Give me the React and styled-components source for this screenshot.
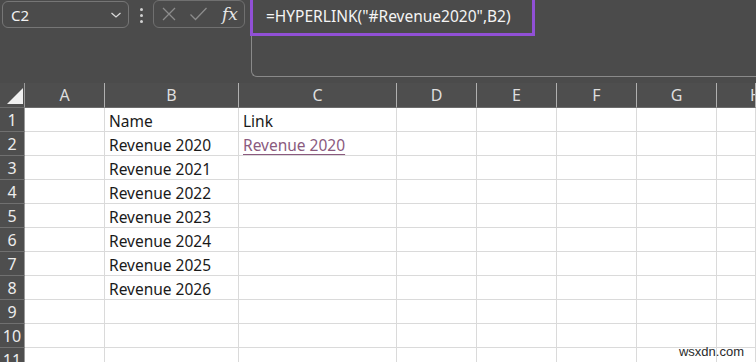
import React from "react";
import styled, { createGlobalStyle } from "styled-components";

const Global = createGlobalStyle`
  html, body { margin: 0; padding: 0; background: #4b4b4b; }
  body { font-family: "Noto Sans", "Open Sans", sans-serif; }
`;

const Screen = styled.div`
  position: relative;
  width: 756px;
  height: 362px;
  overflow: hidden;
  background: #4b4b4b;
`;

const FormulaBar = styled.div`
  display: flex;
  align-items: flex-start;
  height: 83px;
  box-sizing: border-box;
`;

const NameBox = styled.div`
  display: flex;
  align-items: center;
  justify-content: space-between;
  box-sizing: border-box;
  width: 127px;
  height: 27px;
  margin: 1px 0 0 2px;
  padding: 0 6px 0 8px;
  border: 1px solid #767676;
  border-radius: 6px;
  color: #f2f2f2;
  font-size: 15px;
`;

const Dots = styled.div`
  display: flex;
  flex-direction: column;
  gap: 3px;
  margin: 8px 10px 0 11px;
  span {
    width: 3px;
    height: 3px;
    border-radius: 50%;
    background: #d0d0d0;
  }
`;

const FxBox = styled.div`
  display: flex;
  align-items: center;
  gap: 12px;
  box-sizing: border-box;
  width: 92px;
  height: 28px;
  padding: 0 6px 0 7px;
  border: 1px solid #707070;
  border-radius: 6px;
`;

const FxText = styled.span`
  font-family: "DejaVu Serif", "Liberation Serif", serif;
  font-style: italic;
  font-size: 17px;
  color: #e6e6e6;
  margin-left: 2px;
`;

const FormulaArea = styled.div`
  position: relative;
  flex: 1;
  height: 77px;
  margin-left: 6px;
  box-sizing: border-box;
  border-left: 1px solid #8a8a8a;
  border-bottom: 1px solid #8a8a8a;
  border-bottom-left-radius: 6px;
`;

const FormulaText = styled.div`
  padding: 4px 0 0 14px;
  color: #f4f4f4;
  font-size: 15.5px;
  line-height: 24px;
  white-space: nowrap;
`;

const Highlight = styled.div`
  position: absolute;
  left: -2px;
  top: -3px;
  width: 285px;
  height: 39px;
  box-sizing: border-box;
  border: 3px solid #9150d6;
  pointer-events: none;
`;

const Grid = styled.div`
  display: grid;
  grid-template-columns: 25px 80px 134px 158px 80px 80px 80px 80px 1fr;
  grid-template-rows: 25px;
  grid-auto-rows: 24px;
`;

const Corner = styled.div`
  position: relative;
  background: #4e4e4e;
  border-right: 1px solid #9a9a9a;
  border-bottom: 1px solid #6c6c6c;
  box-sizing: border-box;
`;

const ColHead = styled.div`
  display: flex;
  align-items: center;
  justify-content: ${(p) => (p.$left ? "flex-start" : "center")};
  padding-left: ${(p) => (p.$left ? "33px" : "0")};
  background: #4e4e4e;
  color: #dedede;
  font-size: 16px;
  box-sizing: border-box;
  border-right: 1px solid #b0b0b0;
  border-bottom: 1px solid #6c6c6c;
  overflow: hidden;
`;

const RowHead = styled.div`
  display: flex;
  align-items: center;
  justify-content: center;
  background: #4e4e4e;
  color: #ececec;
  font-size: 16px;
  box-sizing: border-box;
  border-right: 1px solid #9a9a9a;
  border-bottom: 1px solid #707070;
`;

const Cell = styled.div`
  display: flex;
  align-items: center;
  background: #ffffff;
  box-sizing: border-box;
  border-right: 1px solid #dadada;
  border-bottom: 1px solid #dadada;
  padding: 2px 0 0 4px;
  font-size: 15.5px;
  color: #1a1a1a;
  white-space: nowrap;
`;

const Link = styled.span`
  color: #8a5a7e;
  text-decoration: underline;
  text-decoration-thickness: 1px;
  text-underline-offset: 3px;
`;

const Watermark = styled.div`
  position: absolute;
  right: 12px;
  bottom: 3px;
  font-family: "Liberation Sans", Arial, sans-serif;
  font-size: 13px;
  color: #2a2a2a;
`;

const cols = ["A", "B", "C", "D", "E", "F", "G"];
const bData = ["Name", "Revenue 2020", "Revenue 2021", "Revenue 2022", "Revenue 2023", "Revenue 2024", "Revenue 2025", "Revenue 2026"];

export default function App() {
  const rows = Array.from({ length: 11 }, (_, i) => i + 1);
  return (
    <Screen>
      <Global />
      <FormulaBar>
        <NameBox>
          <span>C2</span>
          <svg width="12" height="8" viewBox="0 0 12 8">
            <path d="M1.5 2 L6 6 L10.5 2" fill="none" stroke="#d8d8d8" strokeWidth="1.3" />
          </svg>
        </NameBox>
        <Dots>
          <span />
          <span />
          <span />
        </Dots>
        <FxBox>
          <svg width="16" height="16" viewBox="0 0 16 16">
            <path d="M2 2 L14 14 M14 2 L2 14" stroke="#8c8c8c" strokeWidth="1.3" fill="none" />
          </svg>
          <svg width="19" height="16" viewBox="0 0 19 16">
            <path d="M1.5 8.5 L6.5 13.5 L17.5 2" stroke="#8c8c8c" strokeWidth="1.3" fill="none" />
          </svg>
          <FxText>fx</FxText>
        </FxBox>
        <FormulaArea>
          <FormulaText>=HYPERLINK("#Revenue2020",B2)</FormulaText>
          <Highlight />
        </FormulaArea>
      </FormulaBar>
      <Grid>
        <Corner>
          <svg width="16" height="16" viewBox="0 0 16 16" style={{ position: "absolute", left: 7, bottom: 3 }}>
            <path d="M16 0 L16 16 L0 16 Z" fill="#f0f0f0" />
          </svg>
        </Corner>
        {cols.map((c) => (
          <ColHead key={c}>{c}</ColHead>
        ))}
        <ColHead $left>H</ColHead>
        {rows.map((r) => (
          <React.Fragment key={r}>
            <RowHead>{r}</RowHead>
            <Cell />
            <Cell>{bData[r - 1] || ""}</Cell>
            <Cell>{r === 1 ? "Link" : r === 2 ? <Link>Revenue 2020</Link> : ""}</Cell>
            <Cell />
            <Cell />
            <Cell />
            <Cell />
            <Cell />
          </React.Fragment>
        ))}
      </Grid>
      <Watermark>wsxdn.com</Watermark>
    </Screen>
  );
}
